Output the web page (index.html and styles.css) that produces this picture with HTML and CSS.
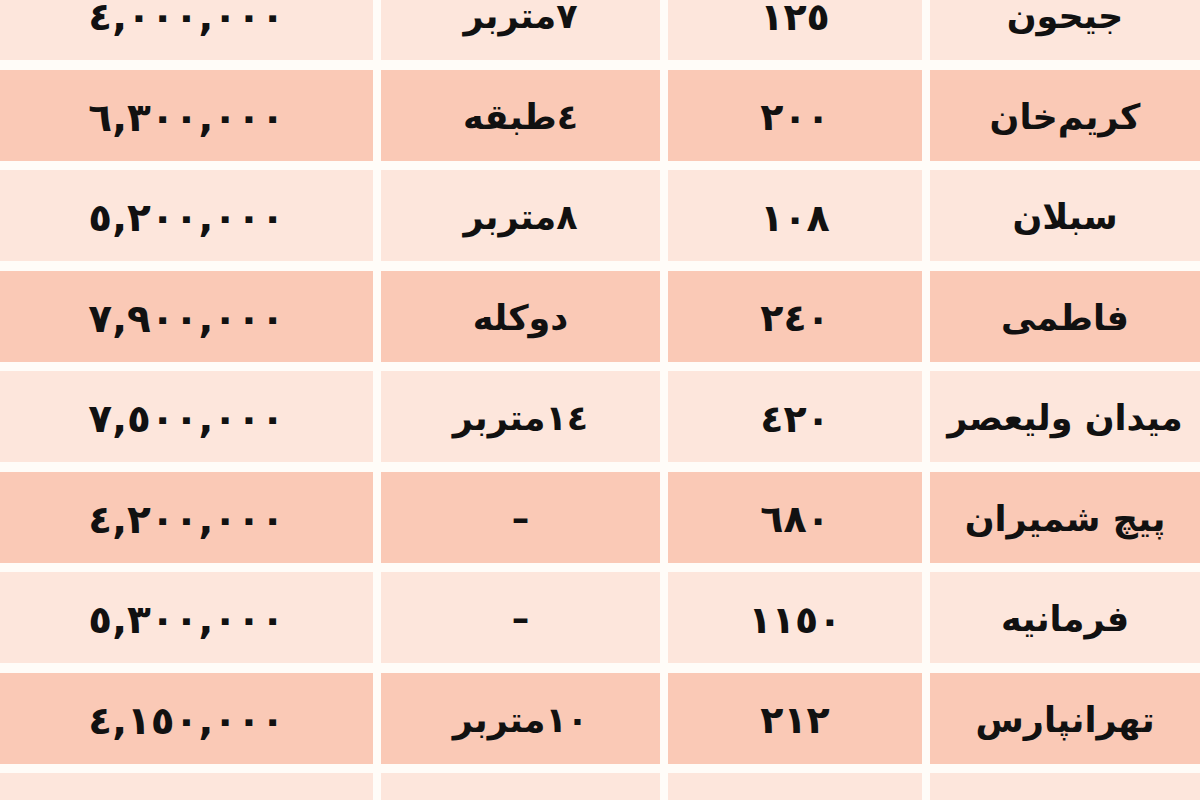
FILE: index.html
```html
<!DOCTYPE html>
<html lang="fa" dir="rtl">
<head>
<meta charset="utf-8">
<title>قیمت ملک</title>
<link rel="stylesheet" href="styles.css">
</head>
<body>
<div class="table">
  <div class="row light"><div class="cell">جیحون</div><div class="cell area">۱۲٥</div><div class="cell">۷متربر</div><div class="cell num">٤,٠٠٠,٠٠٠</div></div>
  <div class="row pink"><div class="cell">کریم‌خان</div><div class="cell area">۲٠٠</div><div class="cell">٤طبقه</div><div class="cell num">٦,٣٠٠,٠٠٠</div></div>
  <div class="row light"><div class="cell">سبلان</div><div class="cell area">۱٠۸</div><div class="cell">۸متربر</div><div class="cell num">٥,۲٠٠,٠٠٠</div></div>
  <div class="row pink"><div class="cell">فاطمی</div><div class="cell area">۲٤٠</div><div class="cell">دوکله</div><div class="cell num">۷,۹٠٠,٠٠٠</div></div>
  <div class="row light"><div class="cell">میدان ولیعصر</div><div class="cell area">٤۲٠</div><div class="cell">۱٤متربر</div><div class="cell num">۷,٥٠٠,٠٠٠</div></div>
  <div class="row pink"><div class="cell">پیچ شمیران</div><div class="cell area">٦۸٠</div><div class="cell">–</div><div class="cell num">٤,۲٠٠,٠٠٠</div></div>
  <div class="row light"><div class="cell">فرمانیه</div><div class="cell area">۱۱٥٠</div><div class="cell">–</div><div class="cell num">٥,۳٠٠,٠٠٠</div></div>
  <div class="row pink"><div class="cell">تهرانپارس</div><div class="cell area">۲۱۲</div><div class="cell">۱٠متربر</div><div class="cell num">٤,۱٥٠,٠٠٠</div></div>
  <div class="row light"><div class="cell">شهرک غرب</div><div class="cell area">۱۲٥</div><div class="cell">۱۲متربر</div><div class="cell num">۷,۲٥٠,٠٠٠</div></div>
</div>
</body>
</html>
```
FILE: styles.css
```css
html, body {
  margin: 0;
  padding: 0;
  background: #fffcf8;
  overflow: hidden;
}
body {
  width: 1200px;
  height: 800px;
  font-family: "DejaVu Sans", "Noto Sans", sans-serif;
  color: #111;
}
.table {
  display: flex;
  flex-direction: column;
  gap: 9.5px;
  margin-top: -31px;
  width: 1200px;
}
.row {
  display: grid;
  grid-template-columns: 270px 254px 279px 373px;
  column-gap: 8px;
  height: 91px;
}
.cell {
  display: flex;
  align-items: center;
  justify-content: center;
  font-size: 35px;
  font-weight: bold;
  line-height: 1;
  padding-top: 4px;
  box-sizing: border-box;
}
.area {
  font-size: 38px;
}
.num {
  direction: ltr;
  font-size: 39px;
}
.light .cell { background: #fde6dc; }
.pink .cell { background: #fac9b6; }
```
